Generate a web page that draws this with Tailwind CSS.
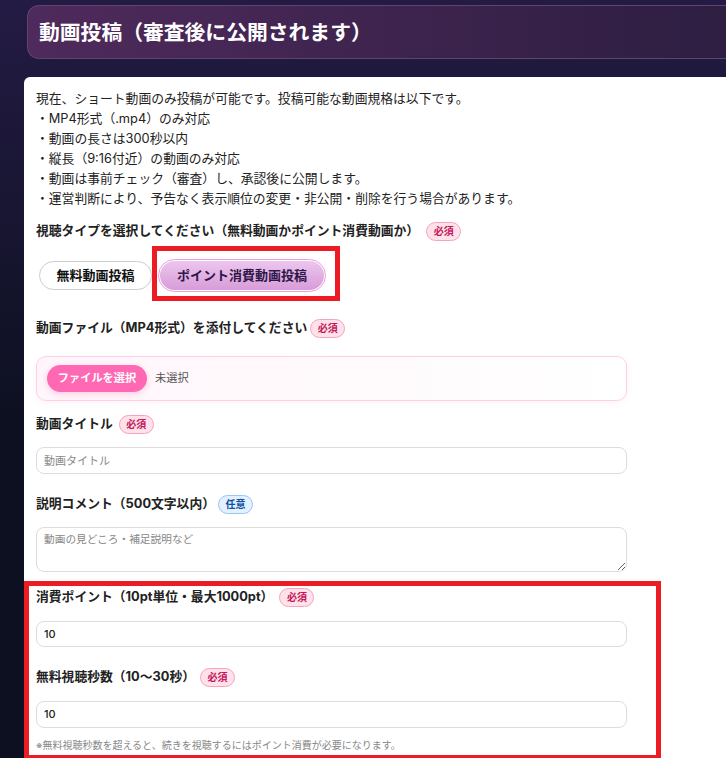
<!DOCTYPE html>
<html lang="ja">
<head>
<meta charset="utf-8">
<script src="https://cdn.jsdelivr.net/npm/@tailwindcss/browser@4"></script>
</head>
<body class="m-0">
<div class="relative h-[758px] w-[726px] overflow-hidden bg-gradient-to-b from-[#241b44] to-[#0d1021] to-55% font-['Inter','Noto_Sans_CJK_JP',sans-serif] text-[12.8px] text-[#222]">
  <div class="pl-[27px] pt-[5px]">
    <div class="flex h-[54px] items-center rounded-l-[12px] border border-r-0 border-[#5f4470] bg-gradient-to-r from-[#4f2a5c] to-[#2e1e42] pt-[2px] pl-[11px]">
      <h1 class="text-[20.8px] leading-none font-bold text-white">動画投稿（審査後に公開されます）</h1>
    </div>
  </div>
  <div class="mt-[18px] ml-[24px] h-[700px] rounded-tl-[6px] bg-white pt-[12px] pr-[99px] pl-[12px]">
    <div class="leading-[20px]">
      <p>現在、ショート動画のみ投稿が可能です。投稿可能な動画規格は以下です。</p>
      <p>・MP4形式（.mp4）のみ対応</p>
      <p>・動画の長さは300秒以内</p>
      <p>・縦長（9:16付近）の動画のみ対応</p>
      <p>・動画は事前チェック（審査）し、承認後に公開します。</p>
      <p>・運営判断により、予告なく表示順位の変更・非公開・削除を行う場合があります。</p>
    </div>
    <div class="mt-[12px] flex h-[20px] items-center gap-[7px] font-bold">
      <span>視聴タイプを選択してください（無料動画かポイント消費動画か）</span>
      <span class="flex h-[19px] w-[35px] items-center justify-center rounded-full border border-[#f7a3c0] bg-[#ffe1ea] text-[10px] font-bold text-[#c2185b]">必須</span>
    </div>
    <div class="mt-[18px] flex items-center gap-[6px] pl-[3px]">
      <div class="flex h-[29px] w-[113px] items-center justify-center rounded-full border border-[#ccc] bg-white text-[13px] font-bold text-[#111]">無料動画投稿</div>
      <div class="flex h-[33px] w-[168px] items-center justify-center rounded-full border border-[#f09ae0] bg-white p-px">
        <div class="flex h-full w-full items-center justify-center rounded-full bg-gradient-to-b from-[#ecc6ee] to-[#d79cd8] text-[13px] font-bold text-[#2e1648]">ポイント消費動画投稿</div>
      </div>
    </div>
    <div class="mt-[26px] flex h-[20px] items-center gap-[3px] font-bold">
      <span>動画ファイル（MP4形式）を添付してください</span>
      <span class="flex h-[19px] w-[35px] items-center justify-center rounded-full border border-[#f7a3c0] bg-[#ffe1ea] text-[10px] font-bold text-[#c2185b]">必須</span>
    </div>
    <div class="mt-[18px] flex h-[45px] items-center gap-[8px] rounded-[10px] border border-[#ffcfe6] bg-gradient-to-r from-[#fff5fa] to-white pl-[10px] shadow-[0_2px_6px_rgba(255,105,180,0.08)]">
      <div class="flex h-[27px] w-[100px] items-center justify-center rounded-full bg-[#ff69b4] text-[11.2px] font-bold text-white shadow-[0_2px_6px_rgba(255,105,180,0.3)]">ファイルを選択</div>
      <span class="text-[11.2px] text-[#555]">未選択</span>
    </div>
    <div class="mt-[13px] flex h-[20px] items-center gap-[6px] font-bold">
      <span>動画タイトル</span>
      <span class="flex h-[19px] w-[35px] items-center justify-center rounded-full border border-[#f7a3c0] bg-[#ffe1ea] text-[10px] font-bold text-[#c2185b]">必須</span>
    </div>
    <input type="text" placeholder="動画タイトル" class="mt-[13px] block h-[27px] w-full rounded-[8px] border border-[#ddd] bg-white px-[7px] text-[11px] placeholder:text-[#888]">
    <div class="mt-[20px] flex h-[20px] items-center gap-[3px] font-bold">
      <span>説明コメント（500文字以内）</span>
      <span class="flex h-[19px] w-[35px] items-center justify-center rounded-full border border-[#9cc4f5] bg-[#e3f0ff] text-[10px] font-bold text-[#0d4fa0]">任意</span>
    </div>
    <textarea placeholder="動画の見どころ・補足説明など" class="mt-[13px] block h-[45px] w-full rounded-[8px] border border-[#ddd] bg-white px-[7px] py-[4px] text-[10.7px] placeholder:text-[#888]"></textarea>
    <div class="mt-[15px] flex h-[20px] items-center gap-[6px] font-bold">
      <span>消費ポイント（10pt単位・最大1000pt）</span>
      <span class="flex h-[19px] w-[35px] items-center justify-center rounded-full border border-[#f7a3c0] bg-[#ffe1ea] text-[10px] font-bold text-[#c2185b]">必須</span>
    </div>
    <input type="text" value="10" class="mt-[14px] block h-[26px] w-full rounded-[8px] border border-[#ddd] bg-white px-[7px] pb-px text-[11px] font-medium text-[#222]">
    <div class="mt-[20px] flex h-[20px] items-center gap-[5px] font-bold">
      <span>無料視聴秒数（10～30秒）</span>
      <span class="flex h-[19px] w-[35px] items-center justify-center rounded-full border border-[#f7a3c0] bg-[#ffe1ea] text-[10px] font-bold text-[#c2185b]">必須</span>
    </div>
    <input type="text" value="10" class="mt-[14px] block h-[27px] w-full rounded-[8px] border border-[#ddd] bg-white px-[7px] pb-px text-[11px] font-medium text-[#222]">
    <p class="mt-[9px] text-[10px] leading-[16px] text-[#888]">※無料視聴秒数を超えると、続きを視聴するにはポイント消費が必要になります。</p>
  </div>
  <div class="absolute top-[246px] left-[152px] h-[55px] w-[188px] border-[5px] border-[#ed1c24]"></div>
  <div class="absolute top-[581px] left-[24px] h-[177px] w-[637px] border-[5px] border-b-[3px] border-[#ed1c24]"></div>
</div>
</body>
</html>
